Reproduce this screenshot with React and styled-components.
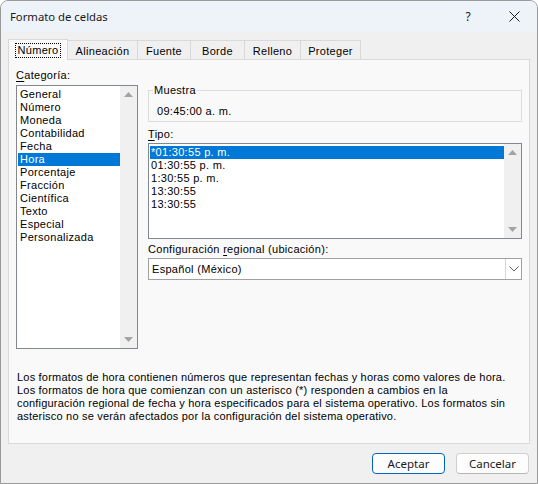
import styled, { createGlobalStyle } from 'styled-components';

//base page reset, the dialog takes the whole window
const GlobalStyle = createGlobalStyle`
    html, body {
        margin: 0;
        padding: 0;
        background: #ffffff;
    }
    * {
        box-sizing: border-box;
    }
`;

const ui = '"Liberation Sans", Arial, sans-serif';
const title = '"Noto Sans", "Open Sans", sans-serif';

//window frame
const Window = styled.div`
    width: 538px;
    height: 484px;
    border: 1px solid #9a9a9a;
    border-radius: 8px 8px 0 0;
    overflow: hidden;
    background: #f0f0f0;
    display: flex;
    flex-direction: column;
    font-family: ${ui};
    font-size: 11px;
    letter-spacing: 0.3px;
    color: #000;
`;
const TitleBar = styled.div`
    height: 31px;
    flex: none;
    background: #eef2f9;
    display: flex;
    align-items: center;
    padding-left: 9px;
    font-family: ${title};
    font-size: 11.3px;
    letter-spacing: 0;
    color: #1a1a1a;
`;
const TitleText = styled.span`
    flex: 1;
`;
const CaptionButton = styled.span`
    width: 46px;
    height: 31px;
    display: flex;
    align-items: center;
    justify-content: center;
    font-size: 12px;
`;
const Body = styled.div`
    flex: 1;
    display: flex;
    flex-direction: column;
    padding: 6px 7px 9px 7px;
`;

//tab strip
const TabRow = styled.div`
    height: 21px;
    display: flex;
    align-items: flex-end;
`;
const Tab = styled.div`
    width: ${(p) => p.w}px;
    height: ${(p) => (p.active ? 21 : 19)}px;
    margin-left: ${(p) => (p.first ? 0 : -1)}px;
    margin-bottom: ${(p) => (p.active ? -1 : 0)}px;
    position: relative;
    z-index: ${(p) => (p.active ? 2 : 1)};
    background: ${(p) => (p.active ? '#f9f9f9' : '#f0f0f0')};
    border: 1px solid #d9d9d9;
    border-bottom: none;
    display: flex;
    align-items: center;
    justify-content: center;
    padding-top: ${(p) => (p.active ? 0 : 1)}px;
`;
const FocusRect = styled.span`
    border: 1px dotted #000;
    padding: 1px 2px;
    line-height: 11px;
`;

const Panel = styled.div`
    height: 385px;
    background: #f9f9f9;
    border: 1px solid #d9d9d9;
    padding: 9px 7px 0 7px;
`;
const Columns = styled.div`
    display: grid;
    grid-template-columns: 122px 1fr;
    column-gap: 10px;
    align-items: start;
`;
const Column = styled.div`
    display: flex;
    flex-direction: column;
    padding-top: ${(p) => p.top || 0}px;
`;
const Label = styled.div`
    line-height: 13px;
    margin-top: ${(p) => p.mt || 0}px;
    margin-bottom: ${(p) => p.gap}px;
    white-space: nowrap;
    u {
        text-decoration-thickness: 1px;
        text-underline-offset: 2px;
    }
`;

//list boxes
const ListBox = styled.div`
    height: ${(p) => p.h}px;
    border: 1px solid #828790;
    background: #fff;
    display: flex;
    padding: 1px 0 1px 1px;
`;
const Items = styled.div`
    flex: 1;
    padding-top: ${(p) => p.pt || 0}px;
`;
const Item = styled.div`
    height: 13px;
    line-height: 13px;
    padding-left: ${(p) => p.indent}px;
    white-space: nowrap;
    background: ${(p) => (p.selected ? '#0078d7' : 'transparent')};
    color: ${(p) => (p.selected ? '#fff' : '#000')};
`;
const ScrollTrack = styled.div`
    width: 17px;
    margin: -1px 0;
    background: #f0f0f0;
    display: flex;
    flex-direction: column;
    justify-content: space-between;
    align-items: center;
    padding: 6px 0;
`;

//sample group box
const Group = styled.fieldset`
    margin: 0;
    height: 38px;
    border: 1px solid #dcdcdc;
    padding: 8px 0 0 8px;
    line-height: 13px;
`;
const Legend = styled.legend`
    padding: 0 1px;
    margin-left: -4px;
    line-height: 13px;
`;

const Combo = styled.div`
    height: 22px;
    border: 1px solid #a0a0a0;
    background: #fff;
    display: flex;
    align-items: stretch;
`;
const ComboText = styled.div`
    flex: 1;
    line-height: 20px;
    padding-left: 3px;
`;
const ComboButton = styled.div`
    width: 16px;
    border-left: 1px solid #d6d6d6;
    display: flex;
    align-items: center;
    justify-content: center;
`;

const Description = styled.p`
    margin: 22px 0 0 1px;
    line-height: 13px;
    white-space: nowrap;
    letter-spacing: 0.2px;
`;

const ButtonRow = styled.div`
    display: flex;
    justify-content: flex-end;
    gap: 11px;
    margin-top: 9px;
    padding-right: 1px;
`;
const Button = styled.button`
    width: 73px;
    height: 21px;
    border-radius: 4px;
    background: #fdfdfd;
    border: 1px solid ${(p) => (p.primary ? '#0067c0' : '#d0d0d0')};
    border-bottom-color: ${(p) => (p.primary ? '#0067c0' : '#b8b8b8')};
    font-family: ${title};
    font-size: 11.5px;
    color: #1a1a1a;
    padding: 0;
    line-height: 18px;
`;

function Arrow({ up }) {
    return (
        <svg width="9" height="5" viewBox="0 0 9 5">
            <polygon points={up ? '0,5 9,5 4.5,0' : '0,0 9,0 4.5,5'} fill="#a3a3a3" />
        </svg>
    );
}

const tabs = [
    { name: 'Número', w: 60 },
    { name: 'Alineación', w: 71 },
    { name: 'Fuente', w: 54 },
    { name: 'Borde', w: 55 },
    { name: 'Relleno', w: 57 },
    { name: 'Proteger', w: 61 },
];

const categories = [
    'General',
    'Número',
    'Moneda',
    'Contabilidad',
    'Fecha',
    'Hora',
    'Porcentaje',
    'Fracción',
    'Científica',
    'Texto',
    'Especial',
    'Personalizada',
];

const types = ['*01:30:55 p. m.', '01:30:55 p. m.', '1:30:55 p. m.', '13:30:55', '13:30:55'];

//lines of the help text, broken like the dialog does
const help = [
    'Los formatos de hora contienen números que representan fechas y horas como valores de hora.',
    'Los formatos de hora que comienzan con un asterisco (*) responden a cambios en la',
    'configuración regional de fecha y hora especificados para el sistema operativo. Los formatos sin',
    'asterisco no se verán afectados por la configuración del sistema operativo.',
];

function App() {
    return (
        <>
            <GlobalStyle />
            <Window>
                <TitleBar>
                    <TitleText>Formato de celdas</TitleText>
                    <CaptionButton>?</CaptionButton>
                    <CaptionButton>
                        <svg width="11" height="11" viewBox="0 0 11 11">
                            <path d="M0.5 0.5 L10.5 10.5 M10.5 0.5 L0.5 10.5" stroke="#1a1a1a" strokeWidth="1" />
                        </svg>
                    </CaptionButton>
                </TitleBar>
                <Body>
                    <TabRow>
                        {tabs.map((t, i) => (
                            <Tab key={t.name} w={t.w} first={i === 0} active={i === 0}>
                                {i === 0 ? <FocusRect>{t.name}</FocusRect> : t.name}
                            </Tab>
                        ))}
                    </TabRow>
                    <Panel>
                        <Columns>
                            <Column>
                                <Label gap={3}>
                                    <u>C</u>ategoría:
                                </Label>
                                <ListBox h={264}>
                                    <Items pt={1}>
                                        {categories.map((c) => (
                                            <Item key={c} indent={2} selected={c === 'Hora'}>
                                                {c}
                                            </Item>
                                        ))}
                                    </Items>
                                    <ScrollTrack>
                                        <Arrow up />
                                        <Arrow />
                                    </ScrollTrack>
                                </ListBox>
                            </Column>
                            <Column top={15}>
                                <Group>
                                    <Legend>Muestra</Legend>
                                    09:45:00 a. m.
                                </Group>
                                <Label gap={2} mt={6}>
                                    <u>T</u>ipo:
                                </Label>
                                <ListBox h={96}>
                                    <Items pt={1}>
                                        {types.map((t, i) => (
                                            <Item key={i} indent={1} selected={i === 0}>
                                                {t}
                                            </Item>
                                        ))}
                                    </Items>
                                    <ScrollTrack>
                                        <Arrow up />
                                        <Arrow />
                                    </ScrollTrack>
                                </ListBox>
                                <Label gap={2} mt={4}>
                                    Configuración <u>r</u>egional (ubicación):
                                </Label>
                                <Combo>
                                    <ComboText>Español (México)</ComboText>
                                    <ComboButton>
                                        <svg width="10" height="6" viewBox="0 0 10 6">
                                            <path d="M0.5 0.5 L5 5 L9.5 0.5" fill="none" stroke="#606060" strokeWidth="1" />
                                        </svg>
                                    </ComboButton>
                                </Combo>
                            </Column>
                        </Columns>
                        <Description>
                            {help.map((line, i) => (
                                <span key={i}>
                                    {line}
                                    <br />
                                </span>
                            ))}
                        </Description>
                    </Panel>
                    <ButtonRow>
                        <Button primary>Aceptar</Button>
                        <Button>Cancelar</Button>
                    </ButtonRow>
                </Body>
            </Window>
        </>
    );
}

export default App;
